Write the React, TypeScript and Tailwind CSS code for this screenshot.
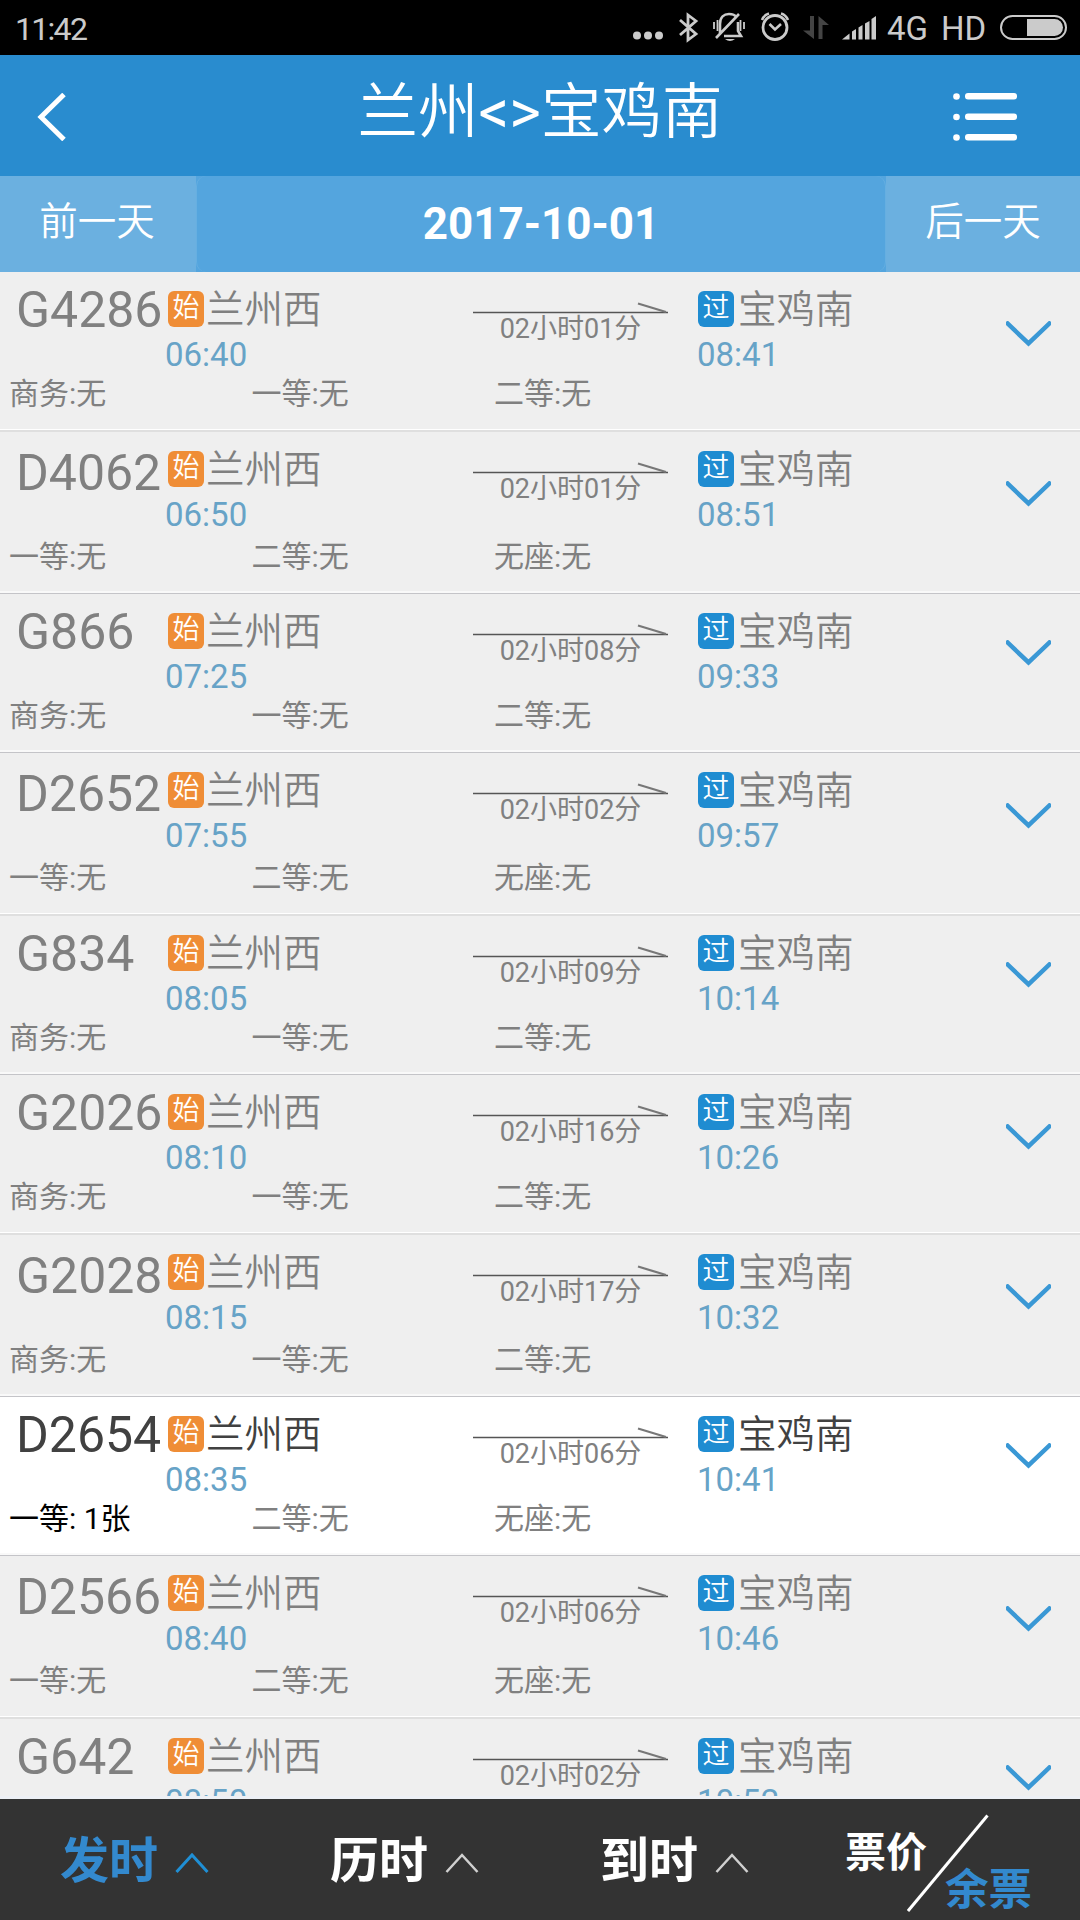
import clsx from 'clsx'

const soft = 'border-b-2 border-[#dfdfdf] shadow-[inset_0_-1px_0_#fff]'
const sharp = 'border-b border-[#c4c4c8] shadow-[inset_0_-2px_0_#f9f9f9]'

const trains = [
  { no: 'G4286', dep: '06:40', arr: '08:41', time: '02小时01分', seats: ['商务:无', '一等:无', '二等:无'], row: clsx('h-[160px]', soft), name: 'mt-[13px]', seat: 'mt-[7px]', arrow: 'mt-[49px]' },
  { no: 'D4062', dep: '06:50', arr: '08:51', time: '02小时01分', seats: ['一等:无', '二等:无', '无座:无'], row: clsx('h-[162px]', sharp), name: 'mt-[16px]', seat: 'mt-[10px]', arrow: 'mt-[49px]' },
  { no: 'G866', dep: '07:25', arr: '09:33', time: '02小时08分', seats: ['商务:无', '一等:无', '二等:无'], row: clsx('h-[159px]', sharp), name: 'mt-[13px]', seat: 'mt-[7px]', arrow: 'mt-[46px]' },
  { no: 'D2652', dep: '07:55', arr: '09:57', time: '02小时02分', seats: ['一等:无', '二等:无', '无座:无'], row: clsx('h-[163px]', soft), name: 'mt-[16px]', seat: 'mt-[10px]', arrow: 'mt-[50px]' },
  { no: 'G834', dep: '08:05', arr: '10:14', time: '02小时09分', seats: ['商务:无', '一等:无', '二等:无'], row: clsx('h-[159px]', sharp), name: 'mt-[13px]', seat: 'mt-[7px]', arrow: 'mt-[46px]' },
  { no: 'G2026', dep: '08:10', arr: '10:26', time: '02小时16分', seats: ['商务:无', '一等:无', '二等:无'], row: clsx('h-[160px]', soft), name: 'mt-[13px]', seat: 'mt-[7px]', arrow: 'mt-[49px]' },
  { no: 'G2028', dep: '08:15', arr: '10:32', time: '02小时17分', seats: ['商务:无', '一等:无', '二等:无'], row: clsx('h-[162px]', sharp), name: 'mt-[16px]', seat: 'mt-[10px]', arrow: 'mt-[49px]' },
  { no: 'D2654', dep: '08:35', arr: '10:41', time: '02小时06分', seats: ['一等: 1张', '二等:无', '无座:无'], row: clsx('h-[159px]', sharp), name: 'mt-[13px]', seat: 'mt-[7px]', arrow: 'mt-[46px]', open: true },
  { no: 'D2566', dep: '08:40', arr: '10:46', time: '02小时06分', seats: ['一等:无', '二等:无', '无座:无'], row: clsx('h-[163px]', soft), name: 'mt-[16px]', seat: 'mt-[10px]', arrow: 'mt-[50px]' },
  { no: 'G642', dep: '08:50', arr: '10:52', time: '02小时02分', seats: ['商务:无', '一等:无', '二等:无'], row: 'h-[160px]', name: 'mt-[13px]', seat: 'mt-[7px]', arrow: 'mt-[46px]' },
]

function StatusBar() {
  return (
    <div className="flex h-[55px] shrink-0 items-start bg-black text-[32px] leading-[34px] text-[#cbcbcb]">
      <span className="mt-[12px] ml-[15px] tracking-[-1.7px]">11:42</span>
      <svg className="ml-auto h-[55px] w-[250px]" viewBox="630 0 250 55" fill="none" stroke="#cbcbcb" strokeWidth="3">
        <g fill="#cbcbcb" stroke="none">
          <circle cx="637" cy="35.5" r="4" />
          <circle cx="648" cy="35.5" r="4" />
          <circle cx="659" cy="35.5" r="4" />
        </g>
        <path d="M680 20L696 34L688 40V15L696 21L680 35" strokeWidth="2.8" />
        {/* muted bell */}
        <path d="M720 33V24C720 17 724 14 729 14C733 14 735 15 736 17M738 22V31L741 36H724M716 38L739 14" strokeWidth="2.6" />
        <path d="M725 39Q730 43 735 39Z" fill="#cbcbcb" stroke="none" />
        <path d="M714 22V29M717.5 20V31M740.5 20V31M744 22V29" strokeWidth="1.8" />
        <circle cx="775" cy="27.5" r="12" strokeWidth="2.8" />
        <path d="M769.5 24L775 29.5L781 24" strokeWidth="2.6" />
        <path d="M762 20Q764 15 769 13.5M788 20Q786 15 781 13.5" strokeWidth="2.6" />
        <g fill="#444" stroke="none">
          <path d="M810 16H814V39L803 30.500H810Z" />
          <path d="M818.500 39V16L829 25H822.500V39Z" />
        </g>
        <g fill="#cbcbcb" stroke="none">
          <path d="M842 39.500L849.500 33.500V39.500Z" />
          <path d="M852 39.500V31.500L856 29V39.500Z" />
          <path d="M858.500 39.500V27.500L862.500 25V39.500Z" />
          <path d="M865 39.500V23.500L869.500 21V39.500Z" />
          <path d="M871.500 39.500V19L876 16V39.500Z" />
        </g>
      </svg>
      <span className="mt-[12px] ml-[7px] w-[54px] text-[33px]">4G</span>
      <span className="mt-[12px] w-[59px] text-[33px]">HD</span>
      <div className="mt-[15px] mr-[13px] flex h-[25px] w-[67px] justify-end rounded-full border-2 border-[#cbcbcb] p-[2px]">
        <div className="h-full w-[36px] rounded-r-full bg-[#cbcbcb]" />
      </div>
    </div>
  )
}

function Header() {
  return (
    <div className="flex h-[121px] shrink-0 items-start bg-[#298ccf] text-white">
      <svg className="mt-[38px] ml-[37px] h-[48px] w-[30px]" viewBox="0 0 30 48" fill="none" stroke="#fff" strokeWidth="5">
        <path d="M27 1.500L4 24L27 46.500" />
      </svg>
      <h1 className="mt-[24px] ml-[147px] w-[652px] text-center text-[60.500px] leading-[68px] font-[350]">
        兰州<span className="font-normal">&lt;&gt;</span>宝鸡南
      </h1>
      <svg className="mt-[36px] ml-[85px] h-[52px] w-[68px] shrink-0" viewBox="952 91 68 52" fill="#fff">
        <circle cx="957.500" cy="96.500" r="3.300" />
        <circle cx="957.500" cy="117" r="3.300" />
        <circle cx="957.500" cy="137.500" r="3.300" />
        <rect x="966" y="93" width="52" height="6.500" rx="3" />
        <rect x="966" y="113.500" width="52" height="6.500" rx="3" />
        <rect x="966" y="134" width="52" height="6.500" rx="3" />
      </svg>
    </div>
  )
}

function DateBar() {
  return (
    <div className="flex h-[96px] shrink-0 bg-[#54a5de] text-center text-white">
      <div className="w-[196px] bg-[#6bb0e0] pt-[21px] pr-[2px] text-[38.5px] leading-[50px] font-[350]">前一天</div>
      <div className="flex-1 rounded-[10px] border-x border-[#66afe1] pt-[23px] text-[44px] leading-[50px] font-bold">2017-10-01</div>
      <div className="w-[194px] bg-[#6bb0e0] pt-[21px] text-[38.5px] leading-[50px] font-[350]">后一天</div>
    </div>
  )
}

function Badge({ text, color }: { text: string; color: string }) {
  return (
    <span className={clsx('mt-[19px] h-[36px] w-[36px] rounded-[6px] text-center text-[27px] leading-[34px] font-[350] text-white', color)}>
      {text}
    </span>
  )
}

function TrainRow({ train }: { train: (typeof trains)[number] }) {
  return (
    <div className={clsx('shrink-0', train.row, train.open ? 'bg-white text-[#414141]' : 'bg-[#efefef] text-[#808080]')}>
      <div className="flex h-[100px] items-start">
        <div className={clsx('w-[165px] pl-[16px] text-[50px] leading-[50px]', train.name)}>{train.no}</div>
        <div className="w-[308px]">
          <div className="flex items-start pl-[3px]">
            <Badge text="始" color="bg-[#ef8d36]" />
            <span className="mt-[18px] ml-[2px] text-[38.5px] leading-[40px] font-[350]">兰州西</span>
          </div>
          <div className="mt-[8px] text-[33px] leading-[34px] text-[#67a3c7]">{train.dep}</div>
        </div>
        <div className="w-[224px]">
          <svg className="mt-[29px] h-[13px] w-[196px]" viewBox="0 0 196 13" fill="none" stroke="#555">
            <path d="M0 11.500H195" strokeWidth="1.600" />
            <path d="M165 2.500L193 11" stroke="#777" strokeWidth="2.200" />
          </svg>
          <div className="w-[195px] text-center text-[27px] leading-[30px] text-[#808080]">{train.time}</div>
        </div>
        <div className="w-[309px]">
          <div className="flex items-start pl-px">
            <Badge text="过" color="bg-[#1f8cd1]" />
            <span className="mt-[18px] ml-[4px] text-[38.5px] leading-[40px] font-[350]">宝鸡南</span>
          </div>
          <div className="mt-[8px] text-[33px] leading-[34px] text-[#67a3c7]">{train.arr}</div>
        </div>
        <svg className={clsx('h-[26px] w-[45px]', train.arrow)} viewBox="0 0 45 26" fill="none" stroke="#3a98d5" strokeWidth="4.500">
          <path d="M0 1L22.500 22.500L45 1" />
        </svg>
      </div>
      <div className={clsx('flex pl-[9px] text-[30px] leading-[30px]', train.seat)}>
        {train.seats.map((seat, i) => (
          <span key={i} className={clsx('w-[242.5px] whitespace-pre', train.open && i === 0 ? 'text-black' : 'text-[#808080]')}>
            {seat}
          </span>
        ))}
      </div>
    </div>
  )
}

function SortTab({ label, active }: { label: string; active?: boolean }) {
  return (
    <div className={clsx('flex w-[270px] items-start pl-[60px] font-bold', active ? 'text-[#3389ce]' : 'text-white')}>
      <span className="mt-[33px] w-[115px] text-[49px] leading-[60px]">{label}</span>
      <svg className="mt-[53px] h-[22px] w-[35px]" viewBox="0 0 35 22" fill="none" stroke={active ? '#1f8fd5' : '#d0d0d0'} strokeWidth={active ? 3 : 2.5}>
        <path d="M1.500 20L17 3L32.500 20" />
      </svg>
    </div>
  )
}

export default function App() {
  return (
    <div className="flex h-[1920px] w-[1080px] flex-col overflow-hidden font-['Roboto','Noto_Sans_CJK_SC',sans-serif]">
      <StatusBar />
      <Header />
      <DateBar />
      <div className="h-[1524px] shrink-0 overflow-hidden">
        {trains.map((train) => (
          <TrainRow key={train.no} train={train} />
        ))}
      </div>
      <div className="h-[3px] shrink-0 bg-[#edf0f5]" />
      <div className="flex h-[121px] shrink-0 bg-[#333]">
        <SortTab label="发时" active />
        <SortTab label="历时" />
        <SortTab label="到时" />
        <div className="flex w-[270px] items-start pl-[35px] font-bold">
          <span className="mt-[29px] w-[82px] shrink-0 text-[41px] leading-[50px] text-white">票价</span>
          <svg className="mt-[15px] -ml-[20px] h-[98px] w-[82px] shrink-0" viewBox="0 0 82 98" stroke="#fff" strokeWidth="3">
            <path d="M1 97L80.500 1.500" />
          </svg>
          <span className="mt-[67px] -ml-[44px] shrink-0 text-[43.500px] leading-[50px] text-[#3389ce]">余票</span>
        </div>
      </div>
    </div>
  )
}
